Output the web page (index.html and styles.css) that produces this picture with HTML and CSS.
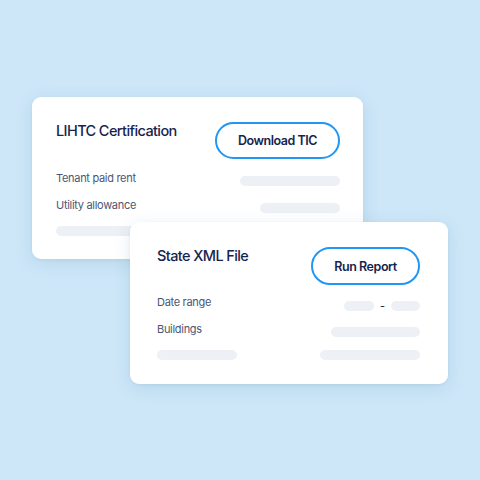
FILE: index.html
```html
<!DOCTYPE html>
<html lang="en">
<head>
<meta charset="utf-8">
<title>Reports</title>
<link rel="stylesheet" href="styles.css">
</head>
<body>
<div class="stage">
  <section class="card card-lihtc">
    <div class="card-head">
      <h2 class="card-title">LIHTC Certification</h2>
      <button class="btn btn-tic">Download TIC</button>
    </div>
    <div class="row">
      <span class="label">Tenant paid rent</span>
      <span class="bar bar-100"></span>
    </div>
    <div class="row">
      <span class="label">Utility allowance</span>
      <span class="bar bar-80"></span>
    </div>
    <div class="row row-bars">
      <span class="bar bar-80 bar-flat"></span>
    </div>
  </section>

  <section class="card card-xml">
    <div class="card-head">
      <h2 class="card-title">State XML File</h2>
      <button class="btn btn-run">Run Report</button>
    </div>
    <div class="row">
      <span class="label">Date range</span>
      <span class="range">
        <span class="bar bar-30"></span>
        <span class="dash">-</span>
        <span class="bar bar-29"></span>
      </span>
    </div>
    <div class="row">
      <span class="label">Buildings</span>
      <span class="bar bar-89"></span>
    </div>
    <div class="row row-bars">
      <span class="bar bar-80 bar-flat"></span>
      <span class="bar bar-100 bar-flat"></span>
    </div>
  </section>
</div>
</body>
</html>
```

FILE: styles.css
```css
* { box-sizing: border-box; }

html, body {
  margin: 0;
  padding: 0;
}

body {
  width: 480px;
  height: 480px;
  overflow: hidden;
  background: #cde7f8;
  font-family: Inter, "Noto Sans", "Liberation Sans", sans-serif;
  color: #17244e;
}

.stage {
  padding: 97px 0 0 32px;
}

.card {
  background: #ffffff;
  border-radius: 9px;
  box-shadow: 0 4px 18px rgba(40, 90, 140, 0.13), 0 1px 3px rgba(40, 90, 140, 0.06);
}

.card-lihtc {
  width: 331px;
  padding: 25px 23px 23px 24px;
}

.card-xml {
  position: relative;
  z-index: 1;
  width: 318px;
  margin: -37px 0 0 98px;
  padding: 23px 28px 24px 27px;
}

.card-head {
  display: flex;
  justify-content: space-between;
  align-items: flex-start;
}

.card-title {
  margin: 0;
  font-size: 14.5px;
  line-height: 18px;
  font-weight: 500;
  letter-spacing: -0.6px;
  color: #17244e;
}

.card-xml .card-title {
  margin-top: 2px;
}

.btn {
  font-family: inherit;
  background: #ffffff;
  border: 2px solid #2196f3;
  border-radius: 999px;
  font-size: 12.5px;
  font-weight: 600;
  letter-spacing: -0.45px;
  color: #17244e;
  padding: 0;
  cursor: pointer;
}

.btn-tic {
  width: 125px;
  height: 37px;
}

.card-xml .btn-run {
  width: 109px;
  height: 38px;
  margin-top: 2px;
}

.row {
  display: flex;
  justify-content: space-between;
  align-items: center;
  height: 14px;
  margin-top: 13px;
}

.card-lihtc .card-head + .row { margin-top: 12px; }
.card-xml .card-head + .row { margin-top: 10px; }

.row-bars {
  height: 10px;
  margin-top: 14px;
  align-items: flex-start;
}

.label {
  font-size: 11px;
  line-height: 14px;
  letter-spacing: -0.3px;
  color: #4b5675;
}

.bar {
  display: block;
  height: 10px;
  border-radius: 5px;
  background: #edf0f5;
  margin-top: 5px;
}

.bar-flat { margin-top: 0; }

.bar-100 { width: 100px; }
.bar-89 { width: 89px; }
.bar-80 { width: 80px; }
.bar-30 { width: 30px; }
.bar-29 { width: 29px; }

.range {
  display: flex;
  align-items: center;
  margin-top: 7px;
}

.range .bar { margin-top: 0; }

.dash {
  font-size: 11px;
  line-height: 10px;
  color: #17244e;
  width: 17px;
  text-align: center;
}
```
